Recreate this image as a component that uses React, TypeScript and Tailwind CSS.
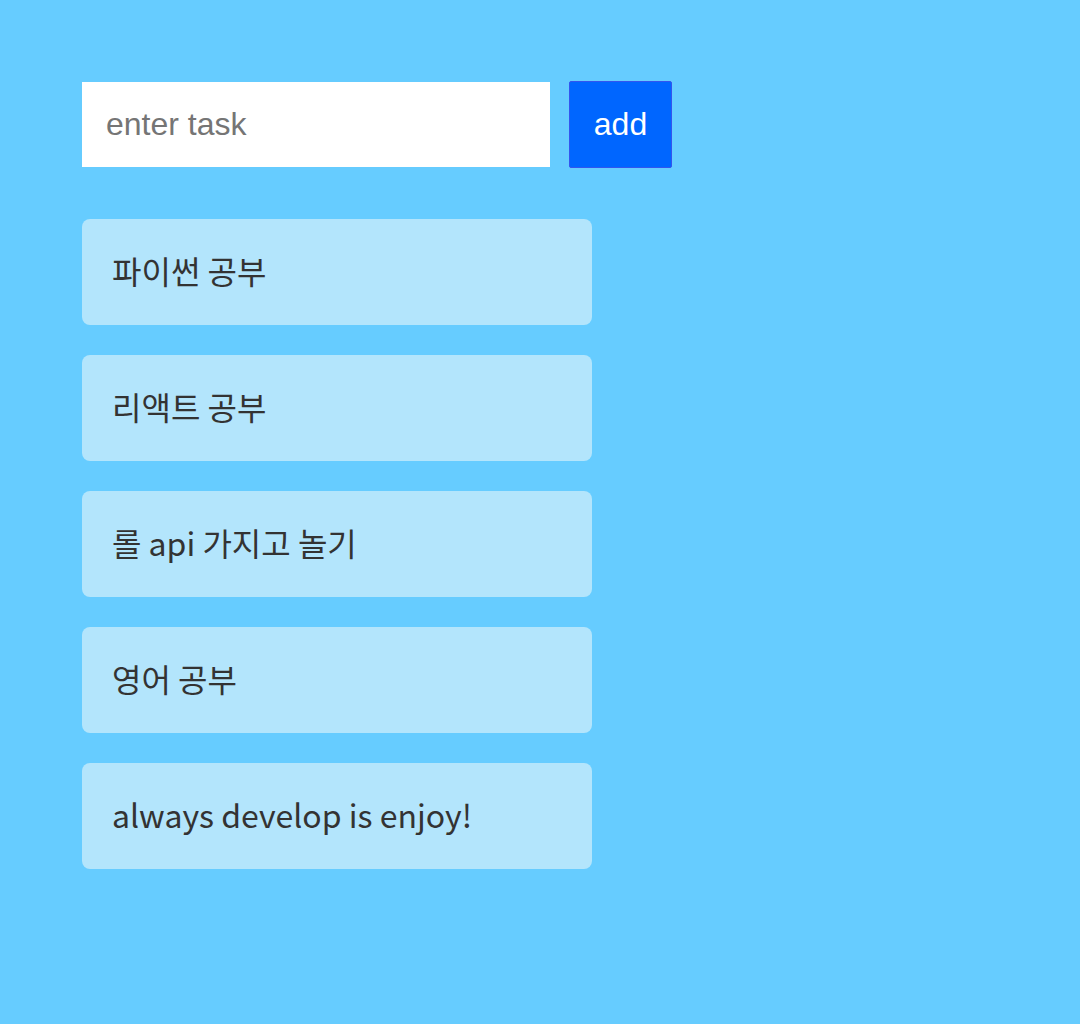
import React from "react";

const tasks = ["파이썬 공부", "리액트 공부", "롤 api 가지고 놀기", "영어 공부", "always develop is enjoy!"];

export default function App() {
  return (
    <div className="min-h-screen w-full bg-[#66ccff] pt-[81px] pl-[82px]">
      <div className="flex items-center">
        <input
          className="w-[468px] h-[85px] bg-white px-[24px] text-[32px] text-[#333] placeholder:text-[#757575] outline-none"
          style={{ fontFamily: '"Liberation Sans", Arial, sans-serif' }}
          placeholder="enter task"
        />
        <button
          className="ml-[19px] w-[103px] h-[87px] pb-[2px] bg-[#0066ff] border border-[#3355ee] rounded-[2px] text-white text-[32px]"
          style={{ fontFamily: '"Liberation Sans", Arial, sans-serif' }}
        >
          add
        </button>
      </div>
      <div className="mt-[51px] flex flex-col gap-[30px]">
        {tasks.map((t) => (
          <div
            key={t}
            className="w-[510px] h-[106px] rounded-[8px] bg-[#b3e5fc] flex items-center px-[30px] pb-[4px] text-[32px] text-[#333]"
            style={{ fontFamily: '"Noto Sans CJK KR", "Noto Sans", sans-serif' }}
          >
            {t}
          </div>
        ))}
      </div>
    </div>
  );
}
